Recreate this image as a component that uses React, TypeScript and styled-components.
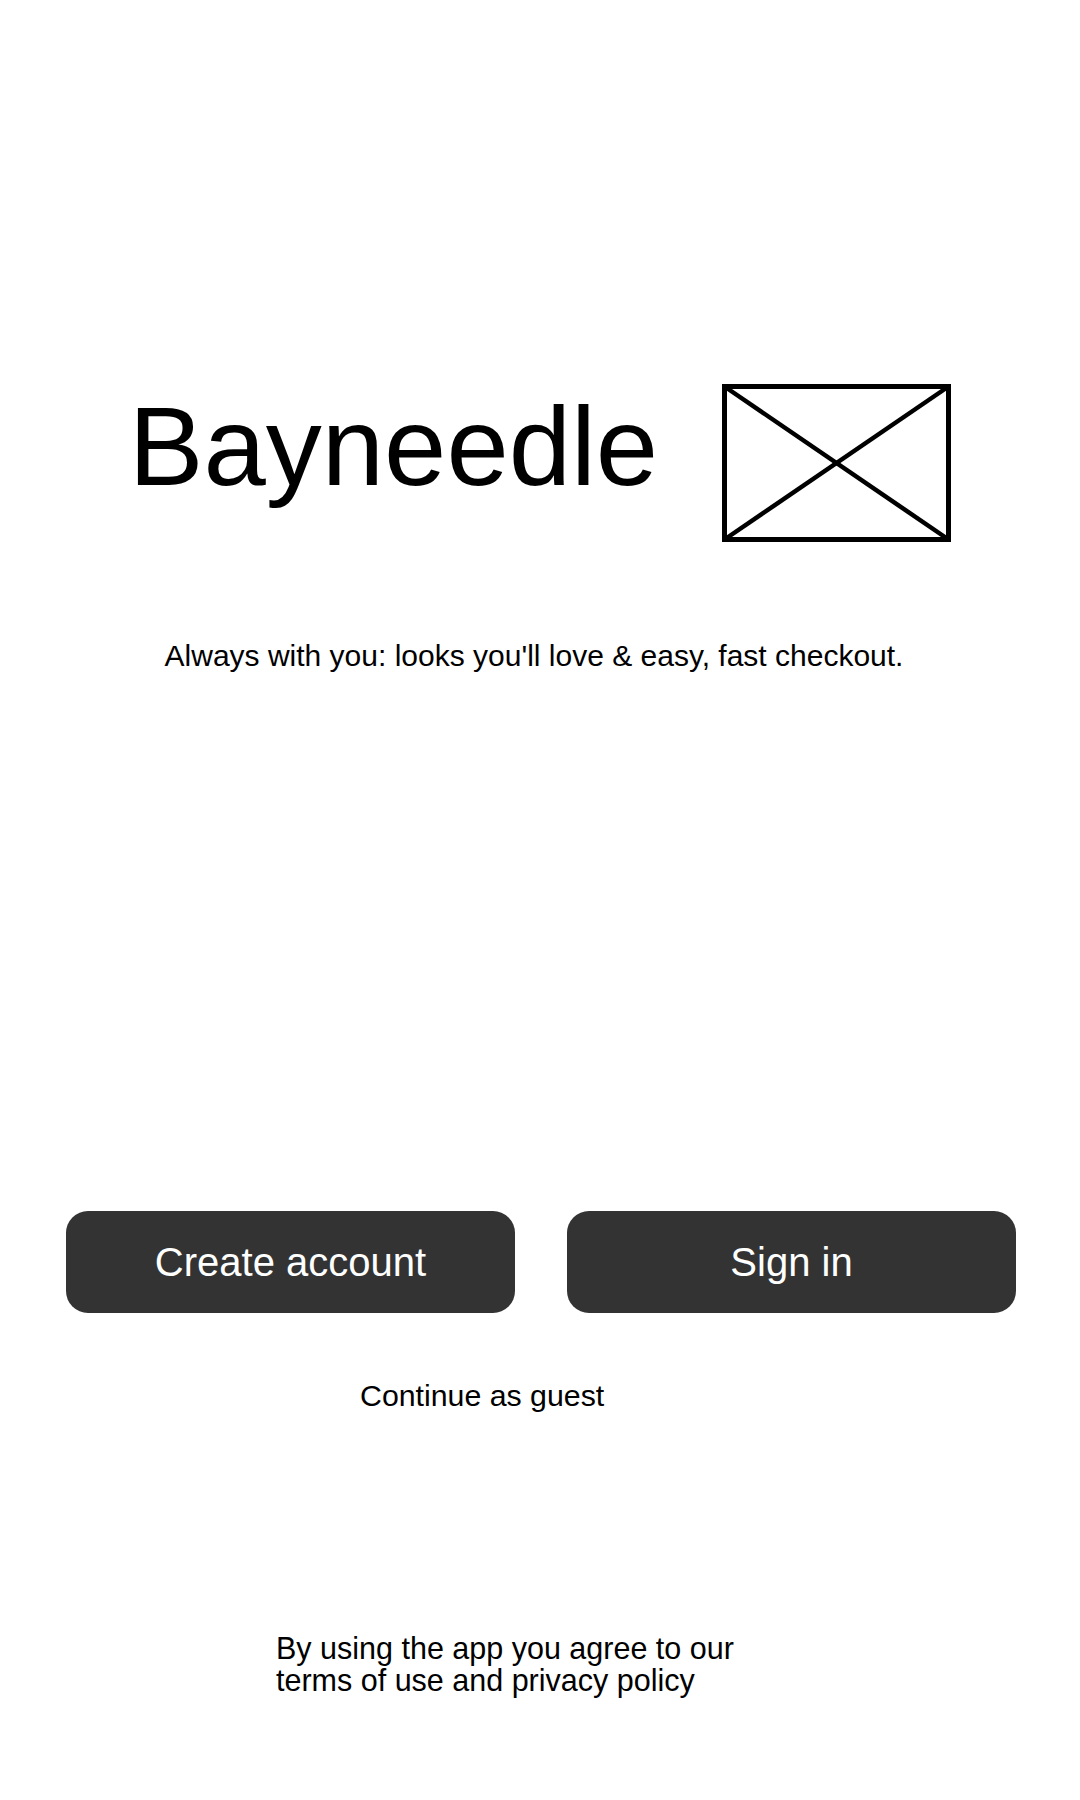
import React from "react";
import styled, { createGlobalStyle } from "styled-components";

const GlobalStyle = createGlobalStyle`
  html, body {
    margin: 0;
    padding: 0;
    background: #ffffff;
  }
  body {
    font-family: "Liberation Sans", Arial, Helvetica, sans-serif;
    color: #000000;
  }
  * { box-sizing: border-box; }
`;

const Page = styled.div`
  width: 1080px;
  min-height: 1800px;
  display: flex;
  flex-direction: column;
  padding-top: 384px;
  background: #ffffff;
`;

const Hero = styled.div`
  display: flex;
  justify-content: center;
  align-items: flex-start;
  gap: 64px;
`;

const Title = styled.h1`
  margin: 7px 0 0;
  font-size: 112px;
  line-height: 112px;
  font-weight: 400;
  letter-spacing: 0;
`;

const LogoFrame = styled.svg`
  display: block;
  flex: none;
`;

const Tagline = styled.p`
  margin: 99px 0 0;
  font-size: 30px;
  line-height: 30px;
  text-align: center;
  padding-right: 12px;
`;

const ButtonRow = styled.div`
  margin-top: 540px;
  display: flex;
  justify-content: center;
  gap: 52px;
  padding-left: 2px;
`;

const ActionButton = styled.button`
  width: 449px;
  height: 102px;
  border: none;
  border-radius: 22px;
  background: #333333;
  color: #ffffff;
  font-family: "Liberation Sans", Arial, Helvetica, sans-serif;
  font-size: 40px;
  line-height: 40px;
  display: flex;
  align-items: center;
  justify-content: center;
  cursor: pointer;
`;

const GuestLink = styled.a`
  display: block;
  margin: 68px 0 0 360px;
  font-size: 30.3px;
  line-height: 30px;
  color: #000000;
  text-decoration: none;
  cursor: pointer;
`;

const Legal = styled.p`
  margin: 221px 0 0 276px;
  font-size: 30.5px;
  line-height: 32px;
  width: 540px;
`;

const Logo = () => (
  <LogoFrame width="229" height="158" viewBox="0 0 229 158">
    <rect x="2.5" y="2.5" width="224" height="153" fill="none" stroke="#000" strokeWidth="5" />
    <line x1="2.5" y1="2.5" x2="226.5" y2="155.5" stroke="#000" strokeWidth="4.5" />
    <line x1="226.5" y1="2.5" x2="2.5" y2="155.5" stroke="#000" strokeWidth="4.5" />
  </LogoFrame>
);

export default function App() {
  return (
    <>
      <GlobalStyle />
      <Page>
        <Hero>
          <Title>Bayneedle</Title>
          <Logo />
        </Hero>
        <Tagline>Always with you: looks you'll love &amp; easy, fast checkout.</Tagline>
        <ButtonRow>
          <ActionButton>Create account</ActionButton>
          <ActionButton>Sign in</ActionButton>
        </ButtonRow>
        <GuestLink>Continue as guest</GuestLink>
        <Legal>
          By using the app you agree to our
          <br />
          terms of use and privacy policy
        </Legal>
      </Page>
    </>
  );
}
